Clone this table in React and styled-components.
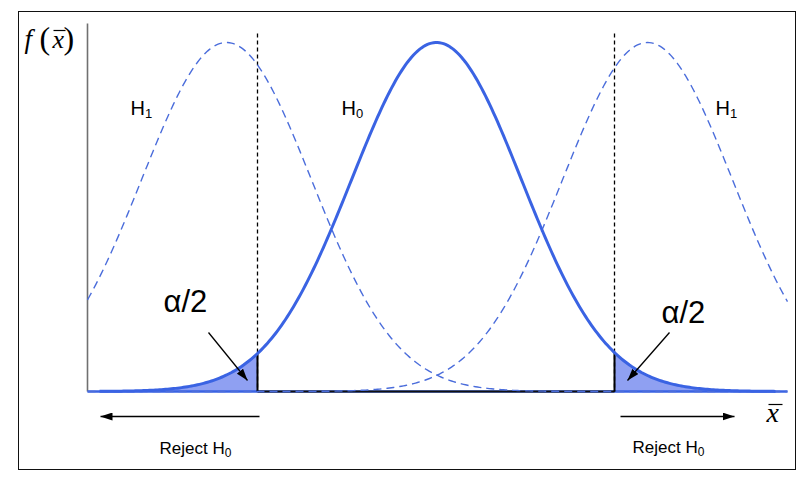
import React from "react";
import styled, { createGlobalStyle } from "styled-components";

const GlobalStyle = createGlobalStyle`
  html, body {
    margin: 0;
    background: #fff;
  }
  body {
    font-family: "Liberation Sans", Arial, sans-serif;
  }
`;

const Page = styled.div`
  width: 808px;
  height: 490px;
  box-sizing: border-box;
  padding: 11px 0 0 18px;
`;

const Frame = styled.div`
  width: 776px;
  height: 457px;
  border: 1.5px solid #111;
  background: #fff;
`;

const Chart = styled.svg`
  display: block;
  width: 100%;
  height: 100%;
`;

const BASE = 392;
const AMP = 349;
const SIGMA = 85;
const BLUE = "#3a63e3";
const DASH_BLUE = "#4b6ddb";
const FILL = "#8fa0f2";

const gauss = (mu) => (x) =>
  BASE - AMP * Math.exp(-((x - mu) * (x - mu)) / (2 * SIGMA * SIGMA));

const curvePath = (fn, from, to, step = 2) => {
  let d = "";
  for (let x = from; x <= to; x += step) {
    d += (x === from ? "M" : " L") + x + " " + fn(x).toFixed(2);
  }
  return d;
};

const tailArea = (fn, from, to) =>
  curvePath(fn, from, to, 1) + ` L${to} ${BASE} L${from} ${BASE} Z`;

const h0 = gauss(437);
const h1Left = gauss(227);
const h1Right = gauss(648);

const LEFT_CRIT = 258;
const RIGHT_CRIT = 615;

const sans = "'Liberation Sans', Arial, sans-serif";
const serif = "'Liberation Serif', 'Times New Roman', serif";

function Label({ x, y, size, sub, subSize, children }) {
  return (
    <text x={x} y={y} fontFamily={sans} fontSize={size} fill="#000">
      {children}
      <tspan fontSize={subSize} dy={subSize * 0.28}>
        {sub}
      </tspan>
    </text>
  );
}

export default function App() {
  return (
    <>
      <GlobalStyle />
      <Page>
        <Frame>
          <Chart viewBox="19.5 12.5 776 457">
            <defs>
              <marker
                id="head"
                markerWidth="12"
                markerHeight="8"
                refX="12"
                refY="4"
                orient="auto"
                markerUnits="userSpaceOnUse"
              >
                <path d="M0 0 L12 4 L0 8 Z" fill="#000" />
              </marker>
            </defs>

            {/* shaded rejection tails */}
            <path d={tailArea(h0, 100, LEFT_CRIT)} fill={FILL} />
            <path d={tailArea(h0, RIGHT_CRIT, 775)} fill={FILL} />

            {/* axes */}
            <line x1="88" y1="24" x2="88" y2={BASE} stroke="#707070" strokeWidth="1.6" />
            <line x1="88" y1={BASE} x2="788" y2={BASE} stroke={BLUE} strokeWidth="2.6" />
            <line x1={LEFT_CRIT} y1={BASE} x2={RIGHT_CRIT} y2={BASE} stroke="#111" strokeWidth="2" />

            {/* critical values */}
            <line
              x1={LEFT_CRIT}
              y1="34"
              x2={LEFT_CRIT}
              y2={BASE}
              stroke="#000"
              strokeWidth="1.3"
              strokeDasharray="4 3"
            />
            <line
              x1={RIGHT_CRIT}
              y1="34"
              x2={RIGHT_CRIT}
              y2={BASE}
              stroke="#000"
              strokeWidth="1.3"
              strokeDasharray="4 3"
            />
            <line x1={LEFT_CRIT} y1={h0(LEFT_CRIT)} x2={LEFT_CRIT} y2={BASE} stroke="#000" strokeWidth="2" />
            <line x1={RIGHT_CRIT} y1={h0(RIGHT_CRIT)} x2={RIGHT_CRIT} y2={BASE} stroke="#000" strokeWidth="2" />

            {/* distributions */}
            <path
              d={curvePath(h1Left, 88, 788)}
              fill="none"
              stroke={DASH_BLUE}
              strokeWidth="1.4"
              strokeDasharray="8 5"
            />
            <path
              d={curvePath(h1Right, 88, 788)}
              fill="none"
              stroke={DASH_BLUE}
              strokeWidth="1.4"
              strokeDasharray="8 5"
            />
            <path d={curvePath(h0, 100, 776)} fill="none" stroke={BLUE} strokeWidth="3" strokeLinejoin="round" />

            {/* pointer arrows */}
            <line x1="209" y1="333" x2="248" y2="381" stroke="#000" strokeWidth="1.3" markerEnd="url(#head)" />
            <line x1="670" y1="333" x2="628" y2="381" stroke="#000" strokeWidth="1.3" markerEnd="url(#head)" />

            {/* rejection direction arrows */}
            <line x1="260" y1="417" x2="101" y2="417" stroke="#000" strokeWidth="1.5" markerEnd="url(#head)" />
            <line x1="621" y1="417" x2="735" y2="417" stroke="#000" strokeWidth="1.5" markerEnd="url(#head)" />

            {/* f(x̄) */}
            <text x="25" y="48" fontFamily={serif} fontStyle="italic" fontSize="27">
              f
            </text>
            <text x="40" y="49" fontFamily={serif} fontSize="32">
              (
            </text>
            <text x="53" y="48" fontFamily={serif} fontStyle="italic" fontSize="26">
              x
            </text>
            <line x1="54" y1="31" x2="66" y2="31" stroke="#000" strokeWidth="1.2" />
            <text x="64" y="49" fontFamily={serif} fontSize="32">
              )
            </text>

            {/* x̄ axis label */}
            <text x="767" y="422" fontFamily={serif} fontStyle="italic" fontSize="28">
              x
            </text>
            <line x1="769" y1="405" x2="783" y2="405" stroke="#000" strokeWidth="1.2" />

            <Label x={131} y={115} size={20} subSize={13} sub="1">
              H
            </Label>
            <Label x={342} y={115} size={20} subSize={13} sub="0">
              H
            </Label>
            <Label x={716} y={115} size={20} subSize={13} sub="1">
              H
            </Label>

            <text x="164" y="312" fontFamily={sans} fontSize="31">
              α/2
            </text>
            <text x="662" y="323" fontFamily={sans} fontSize="31">
              α/2
            </text>

            <Label x={160} y={454} size={17} subSize={12} sub="0">
              Reject H
            </Label>
            <Label x={633} y={453} size={17} subSize={12} sub="0">
              Reject H
            </Label>
          </Chart>
        </Frame>
      </Page>
    </>
  );
}
